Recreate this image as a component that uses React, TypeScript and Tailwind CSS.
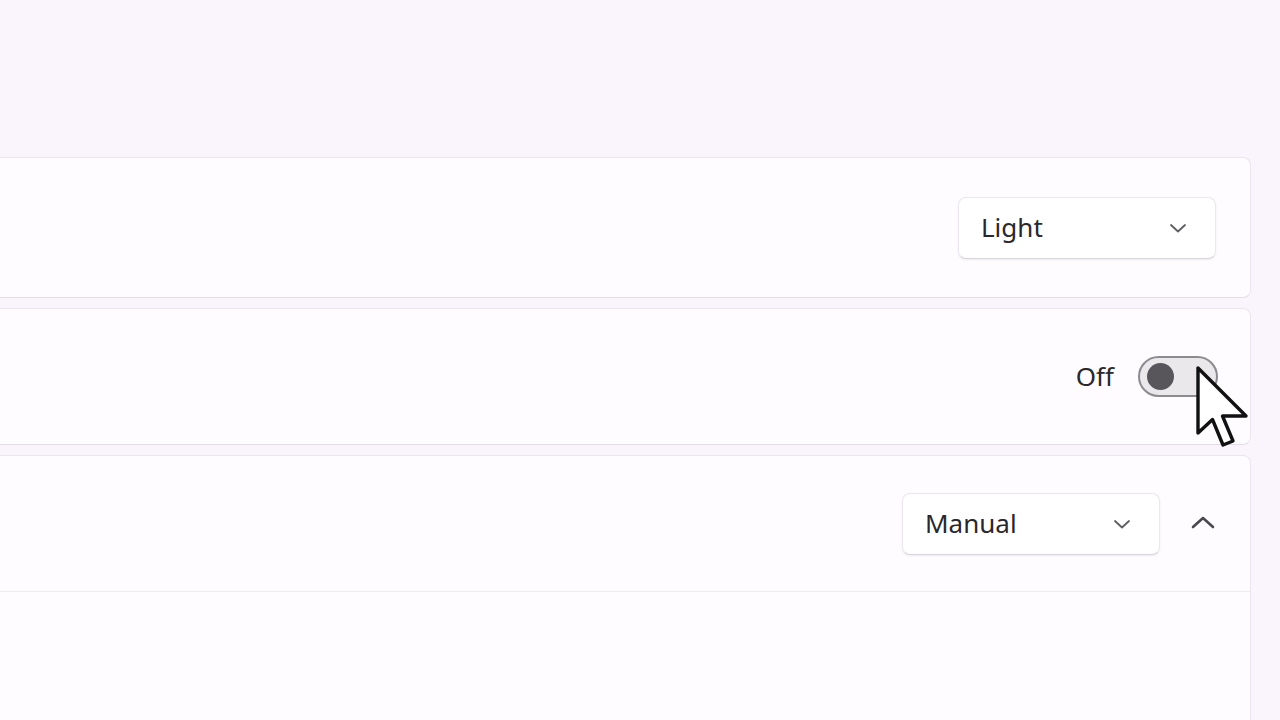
import React from "react";

function ChevronDown() {
  return (
    <svg width="18" height="12" viewBox="0 0 18 12" className="text-[#5f5c62]">
      <path d="M2 3 L9 9.5 L16 3" fill="none" stroke="currentColor" strokeWidth="1.8" strokeLinecap="round" strokeLinejoin="round" />
    </svg>
  );
}

function ChevronUp() {
  return (
    <svg width="26" height="16" viewBox="0 0 26 16" className="text-[#4a474d]">
      <path d="M3 13 L13 4 L23 13" fill="none" stroke="currentColor" strokeWidth="2.6" strokeLinecap="round" strokeLinejoin="round" />
    </svg>
  );
}

function Dropdown({ label }: { label: string }) {
  return (
    <div className="flex h-[62px] w-[258px] items-center justify-between rounded-[8px] border border-[#ece7ef] border-b-[#d9d4dc] bg-white pl-[22px] pr-[28px] shadow-[0_1px_2px_rgba(60,40,80,0.08)]">
      <span className="text-[26px] text-[#2a282c]">{label}</span>
      <ChevronDown />
    </div>
  );
}

function Cursor() {
  return (
    <svg width="66" height="96" viewBox="0 0 66 96" className="absolute left-[1190px] top-[360px]">
      <path
        d="M8 8 L8 73 L22.5 59.5 L33 85 L43 81 L32.5 56 L56 56 Z"
        fill="white"
        stroke="#111"
        strokeWidth="3.4"
        strokeLinejoin="round"
      />
    </svg>
  );
}

export default function App() {
  return (
    <div
      className="relative h-[720px] w-[1280px] overflow-hidden bg-[#faf5fd]"
      style={{ fontFamily: '"Noto Sans", "Open Sans", sans-serif' }}
    >
      <div className="ml-[-10px] mr-[29px] flex flex-col gap-[10px] pt-[157px]">
        <div className="flex h-[141px] items-center justify-end rounded-r-[8px] border border-[#ebe5f0] border-b-[#e2dce8] bg-[#fefcff] pr-[34px]">
          <Dropdown label="Light" />
        </div>
        <div className="flex h-[137px] items-center justify-end rounded-r-[8px] border border-[#ebe5f0] border-b-[#e2dce8] bg-[#fefcff] pr-[32px]">
          <span className="mr-[24px] text-[26px] text-[#2a282c]">Off</span>
          <div className="flex h-[41px] w-[80px] items-center rounded-full border-[2px] border-[#8d8a90] bg-[#ebe8ec] pl-[7px]">
            <div className="h-[27px] w-[27px] rounded-full bg-[#58555b]" />
          </div>
        </div>
        <div className="flex flex-col overflow-hidden rounded-tr-[8px] border border-b-0 border-[#ebe5f0] bg-[#fefcff]">
          <div className="flex h-[136px] items-center justify-end border-b border-[#efeaf2] pr-[34px]">
            <Dropdown label="Manual" />
            <div className="mb-[4px] ml-[30px] flex w-[26px] items-center justify-center">
              <ChevronUp />
            </div>
          </div>
          <div className="h-[140px] bg-[#fefcff]" />
        </div>
      </div>
      <Cursor />
    </div>
  );
}
